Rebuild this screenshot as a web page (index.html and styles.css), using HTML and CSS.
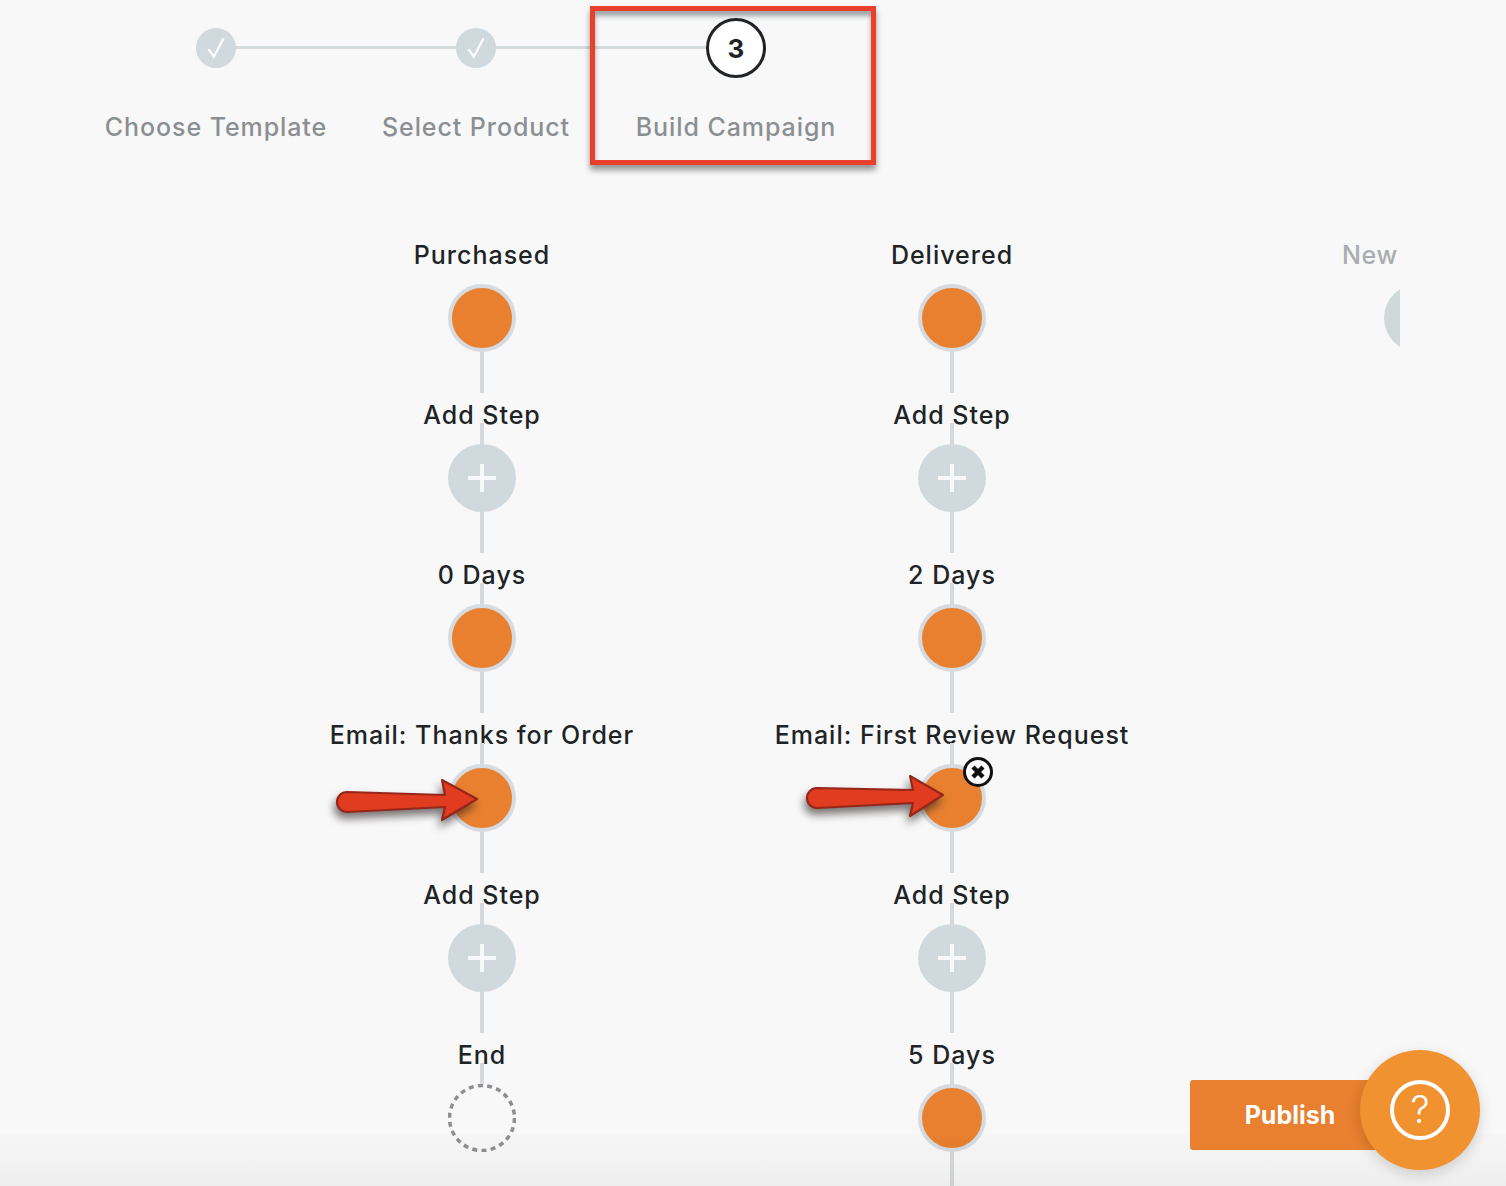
FILE: index.html
```html
<!DOCTYPE html>
<html lang="en">
<head>
<meta charset="utf-8">
<title>Build Campaign</title>
<link rel="stylesheet" href="styles.css">
</head>
<body>
<main class="page">
  <ol class="stepper">
    <li class="stage">
      <span class="stage-dot"><svg class="tick" viewBox="0 0 24 24"><path d="M5 13l5 7L19 3"/></svg></span>
      <span class="stage-name">Choose Template</span>
    </li>
    <li class="stage">
      <span class="stage-dot"><svg class="tick" viewBox="0 0 24 24"><path d="M5 13l5 7L19 3"/></svg></span>
      <span class="stage-name">Select Product</span>
    </li>
    <li class="stage stage-current">
      <span class="stage-dot">3</span>
      <span class="stage-name">Build Campaign</span>
    </li>
  </ol>

  <section class="canvas">
    <div class="flow">
      <div class="step step-first"><span class="label">Purchased</span><i class="wire"></i><span class="node"></span><i class="wire wire-long"></i></div>
      <div class="step"><span class="label">Add Step</span><i class="wire"></i><span class="node node-add"><svg class="plus" viewBox="0 0 30 30"><path d="M15 1v28M1 15h28"/></svg></span><i class="wire wire-long"></i></div>
      <div class="step"><span class="label">0 Days</span><i class="wire"></i><span class="node"></span><i class="wire wire-long"></i></div>
      <div class="step"><span class="label">Email: Thanks for Order</span><i class="wire"></i><span class="node">
        <svg class="arrow" viewBox="0 0 160 80"><path d="M19 48L117 51L114 36L149 55L114 76L117 63L19 68A10 10 0 0 1 19 48Z"/></svg>
      </span><i class="wire wire-long"></i></div>
      <div class="step"><span class="label">Add Step</span><i class="wire"></i><span class="node node-add"><svg class="plus" viewBox="0 0 30 30"><path d="M15 1v28M1 15h28"/></svg></span><i class="wire wire-long"></i></div>
      <div class="step"><span class="label">End</span><i class="wire"></i><span class="node node-end"><svg class="dash" viewBox="0 0 68 68"><circle cx="34" cy="34" r="32.5"/></svg></span></div>
    </div>

    <div class="flow">
      <div class="step step-first"><span class="label">Delivered</span><i class="wire"></i><span class="node"></span><i class="wire wire-long"></i></div>
      <div class="step"><span class="label">Add Step</span><i class="wire"></i><span class="node node-add"><svg class="plus" viewBox="0 0 30 30"><path d="M15 1v28M1 15h28"/></svg></span><i class="wire wire-long"></i></div>
      <div class="step"><span class="label">2 Days</span><i class="wire"></i><span class="node"></span><i class="wire wire-long"></i></div>
      <div class="step"><span class="label">Email: First Review Request</span><i class="wire"></i><span class="node">
        <svg class="arrow arrow-second" viewBox="0 0 160 80"><path d="M19 48L115 50L112 36L145 55L112 76L115 63L19 68A10 10 0 0 1 19 48Z"/></svg>
        <svg class="remove" viewBox="0 0 30 30"><circle cx="15" cy="15" r="13.5"/><path d="M10 10l10 10M20 10L10 20"/></svg>
      </span><i class="wire wire-long"></i></div>
      <div class="step"><span class="label">Add Step</span><i class="wire"></i><span class="node node-add"><svg class="plus" viewBox="0 0 30 30"><path d="M15 1v28M1 15h28"/></svg></span><i class="wire wire-long"></i></div>
      <div class="step"><span class="label">5 Days</span><i class="wire"></i><span class="node"></span><i class="wire wire-long"></i></div>
    </div>

    <div class="flow flow-clipped">
      <div class="step step-first"><span class="label label-faded">New</span><i class="wire"></i><span class="node node-faded"></span></div>
    </div>
  </section>

  <div class="floor"></div>
  <div class="callout"></div>
  <button class="publish">Publish</button>
  <button class="help" aria-label="Help"><span class="help-ring">?</span></button>
</main>
</body>
</html>
```

FILE: styles.css
```css
* { box-sizing: border-box; }
html, body { margin: 0; height: 100%; }
body {
  background: #f8f8f8;
  font-family: "Inter", "Liberation Sans", sans-serif;
  overflow: hidden;
}
.page { position: relative; height: 1186px; overflow: hidden; }

.stepper {
  display: flex;
  list-style: none;
  margin: 0;
  padding: 18px 0 0 86px;
  height: 233px;
}
.stage {
  position: relative;
  width: 260px;
  display: flex;
  flex-direction: column;
  align-items: center;
}
.stage-dot {
  position: relative;
  z-index: 1;
  width: 40px;
  height: 40px;
  margin: 10px 0;
  border-radius: 50%;
  background: #d0d9dd;
  display: flex;
  align-items: center;
  justify-content: center;
}
.stage:not(.stage-current)::after {
  content: "";
  position: absolute;
  left: 130px;
  top: 28px;
  width: 260px;
  height: 3px;
  background: #d5dadc;
}
.tick { width: 26px; height: 26px; fill: none; stroke: #fff; stroke-width: 2; }
.stage-current .stage-dot {
  width: 60px;
  height: 60px;
  margin: 0;
  background: #fff;
  border: 3px solid #202326;
  font-size: 26px;
  font-weight: 700;
  color: #202326;
}
.stage-name {
  margin-top: 33px;
  font-size: 25px;
  line-height: 32px;
  font-weight: 500;
  color: #8b8f92;
  white-space: nowrap;
  letter-spacing: 0.92px;
}

.canvas {
  display: flex;
  width: 1153px;
  margin-left: 247px;
  overflow: hidden;
  height: 953px;
}
.flow { flex: 0 0 470px; display: flex; flex-direction: column; }
.flow-clipped { margin-left: -4px; }
.step { display: flex; flex-direction: column; align-items: center; height: 160px; }
.label {
  height: 30px;
  padding-top: 7px;
  line-height: 30px;
  font-size: 25px;
  font-weight: 500;
  color: #202326;
  background: #f8f8f8;
  white-space: nowrap;
  letter-spacing: 1px;
}
.label-faded { color: #a9adaf; padding-right: 96px; background: none; letter-spacing: 0.7px; }
.wire { display: block; width: 4px; height: 21px; background: #d6d9db; flex: none; }
.wire-long { height: 41px; }
.step-first > .wire:first-of-type { visibility: hidden; }
.node {
  position: relative;
  flex: none;
  width: 68px;
  height: 68px;
  border-radius: 50%;
  background: #e8802f;
  border: 4px solid #d5dbe0;
}
.node-add {
  background: #d0d9de;
  border: 0;
  display: flex;
  align-items: center;
  justify-content: center;
}
.node-faded { background: #d0d9da; border: 0; }
.node-end { background: none; border: 0; }
.plus { width: 30px; height: 30px; fill: none; stroke: #f6f8f9; stroke-width: 4; }
.dash { display: block; width: 68px; height: 68px; fill: #f8f8f8; stroke: #8d8f91; stroke-width: 3.5; stroke-dasharray: 5 4.3; }
.arrow {
  position: absolute;
  left: -124px;
  top: -24px;
  width: 160px;
  height: 80px;
  overflow: visible;
  fill: #e23c20;
  stroke: #96261a;
  stroke-width: 2.2;
  stroke-linejoin: round;
  filter: drop-shadow(-2px 6px 4px rgba(40, 30, 30, 0.6));
}
.arrow-second { top: -28px; }
.remove {
  position: absolute;
  left: 41px;
  top: -11px;
  width: 30px;
  height: 30px;
}
.remove circle { fill: #fff; stroke: #111; stroke-width: 3; }
.remove path { fill: none; stroke: #111; stroke-width: 4.5; }

.floor {
  position: absolute;
  left: 0;
  right: 0;
  bottom: 0;
  height: 52px;
  background: linear-gradient(rgba(0, 0, 0, 0.008), rgba(0, 0, 0, 0.04));
  pointer-events: none;
}
.callout {
  position: absolute;
  left: 590px;
  top: 6px;
  width: 286px;
  height: 159px;
  border: 5px solid #e8402a;
  box-shadow: 0 5px 6px rgba(0, 0, 0, 0.4), inset 0 5px 5px rgba(30, 40, 50, 0.4);
}
.publish {
  position: absolute;
  left: 1190px;
  top: 1080px;
  width: 200px;
  height: 70px;
  padding: 0;
  border: 0;
  border-radius: 3px;
  background: #e8802f;
  color: #fff;
  font: 700 25px "Inter", "Liberation Sans", sans-serif;
}
.help {
  position: absolute;
  left: 1360px;
  top: 1050px;
  width: 120px;
  height: 120px;
  padding: 0;
  border: 0;
  border-radius: 50%;
  background: #f0922f;
  box-shadow: 0 4px 14px rgba(0, 0, 0, 0.16);
  display: flex;
  align-items: center;
  justify-content: center;
}
.help-ring {
  width: 60px;
  height: 60px;
  border: 4px solid #fff;
  border-radius: 50%;
  color: #fff;
  font: 300 38px/50px "Inter", "Liberation Sans", sans-serif;
  text-align: center;
}
```
